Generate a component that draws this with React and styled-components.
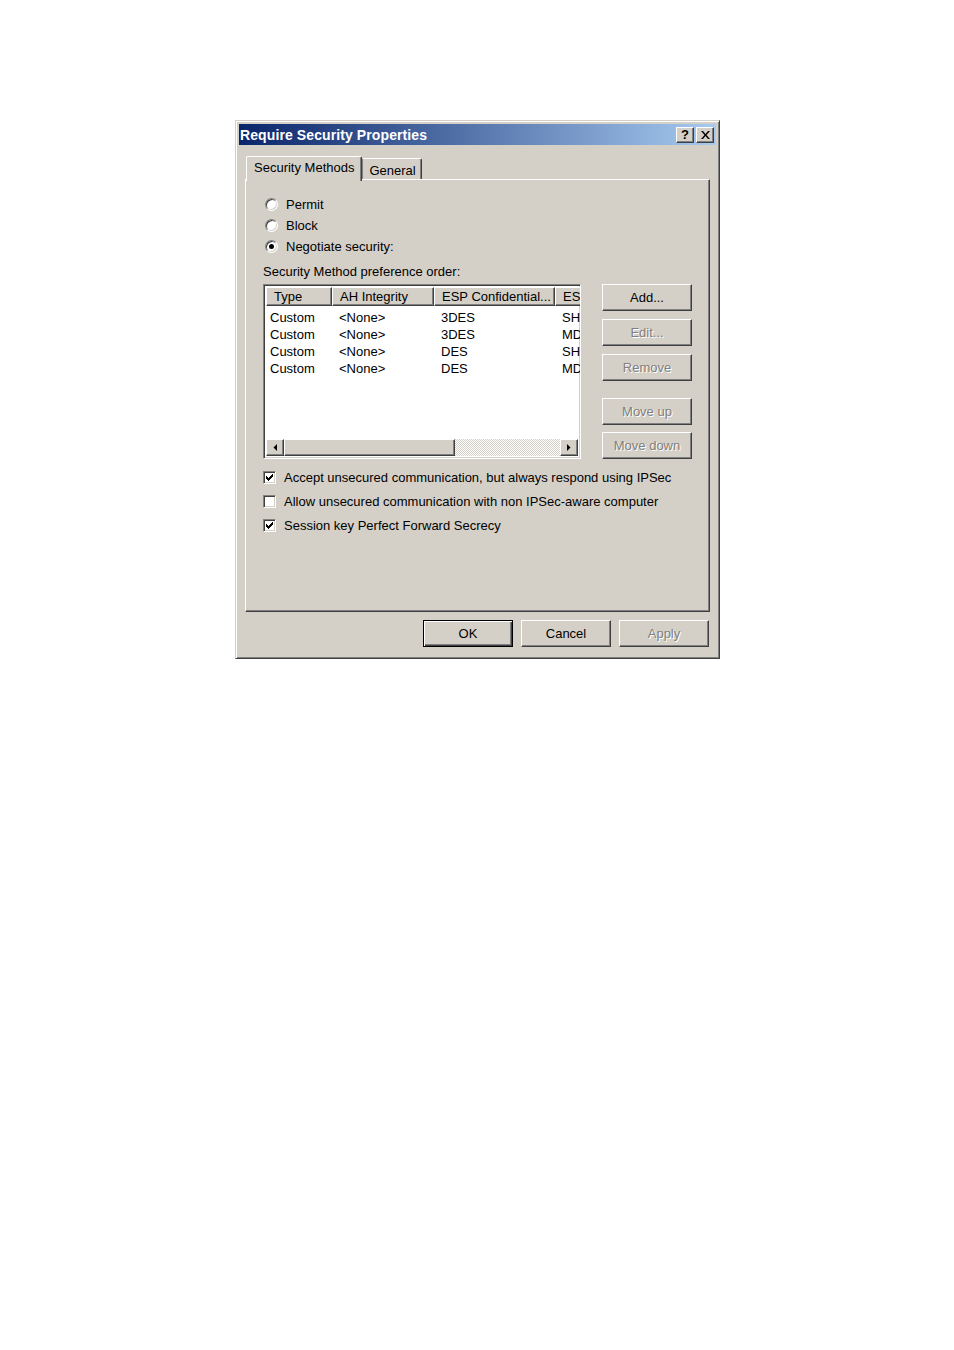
import styled, { createGlobalStyle, css } from 'styled-components';

const GlobalStyle = createGlobalStyle`
	html, body {
		margin: 0;
		padding: 0;
		background: #ffffff;
	}
	body {
		font-family: 'Liberation Sans', Arial, sans-serif;
		font-size: 13px;
		color: #000;
	}
`;

const face = '#d4d0c8';
const shadow = '#808080';
const darkShadow = '#404040';

const raised = css`
	border: 1px solid;
	border-color: #ffffff ${darkShadow} ${darkShadow} #ffffff;
	box-shadow: inset -1px -1px ${shadow}, inset 1px 1px ${face};
`;

const sunken = css`
	border: 1px solid;
	border-color: ${shadow} #ffffff #ffffff ${shadow};
	box-shadow: inset 1px 1px ${darkShadow}, inset -1px -1px ${face};
`;

const Page = styled.div`
	padding: 120px 0 0 235px;
	min-height: 1350px;
	box-sizing: border-box;
`;

const Window = styled.div`
	width: 485px;
	box-sizing: border-box;
	background: ${face};
	border: 1px solid;
	border-color: ${face} ${darkShadow} ${darkShadow} ${face};
	box-shadow: inset 1px 1px #ffffff, inset -1px -1px ${shadow};
	padding: 3px 3px 11px 3px;
	display: flex;
	flex-direction: column;
`;

const TitleBar = styled.div`
	height: 21px;
	display: flex;
	align-items: center;
	justify-content: space-between;
	padding: 0 2px 0 0;
	background: linear-gradient(to right, #0a246a, #a6caf0);
`;

const Title = styled.span`
	color: #ffffff;
	font-weight: bold;
	font-size: 14px;
	letter-spacing: 0.1px;
	padding-left: 1px;
`;

const TitleButtons = styled.div`
	display: flex;
	gap: 2px;
`;

const TitleButton = styled.div`
	${raised};
	width: 18px;
	height: 16px;
	box-sizing: border-box;
	background: ${face};
	display: flex;
	align-items: center;
	justify-content: center;
	font-weight: bold;
	font-size: 13px;
	line-height: 1;
`;

const Body = styled.div`
	padding: 11px 6px 0 6px;
	display: flex;
	flex-direction: column;
`;

const TabStrip = styled.div`
	display: flex;
	align-items: flex-end;
	padding-left: 1px;
	position: relative;
	z-index: 1;
	margin-bottom: -2px;
`;

const Tab = styled.div`
	box-sizing: border-box;
	height: 25px;
	padding: 0 7px 4px 7px;
	display: flex;
	align-items: center;
	background: ${face};
	border-top: 1px solid #ffffff;
	border-left: 1px solid #ffffff;
	border-right: 1px solid ${darkShadow};
	box-shadow: inset -1px 0 ${shadow};
	border-radius: 2px 2px 0 0;
	${(p) =>
		!p.$active &&
		css`
			padding: 2px 5px 0 6px;
			border-left: 1px solid ${shadow};
			margin-bottom: 2px;
			height: 21px;
		`}
`;

const TabPanel = styled.div`
	box-sizing: border-box;
	height: 433px;
	border: 1px solid;
	border-color: #ffffff ${darkShadow} ${darkShadow} #ffffff;
	box-shadow: inset -1px -1px ${shadow};
	padding: 14px 16px 0 17px;
	display: flex;
	flex-direction: column;
`;

const OptionRow = styled.label`
	height: ${(p) => p.$h || 21}px;
	display: flex;
	align-items: center;
	gap: ${(p) => p.$gap || 8}px;
	padding-left: ${(p) => p.$indent || 0}px;
`;

const Radio = styled.span`
	width: 13px;
	height: 13px;
	box-sizing: border-box;
	border-radius: 50%;
	border: 1px solid;
	border-color: ${shadow} #ffffff #ffffff ${shadow};
	box-shadow: inset 1px 1px ${darkShadow}, inset -1px -1px ${face};
	background: #ffffff;
	display: flex;
	align-items: center;
	justify-content: center;
	&::after {
		content: '';
		width: 5px;
		height: 5px;
		border-radius: 50%;
		background: ${(p) => (p.$checked ? '#000' : 'transparent')};
	}
`;

const Checkbox = styled.span`
	${sunken};
	width: 13px;
	height: 13px;
	box-sizing: border-box;
	background: #ffffff;
	display: flex;
	align-items: center;
	justify-content: center;
`;

const SectionLabel = styled.div`
	margin-top: 7px;
	height: 15px;
	display: flex;
	align-items: center;
`;

const Middle = styled.div`
	margin-top: 5px;
	display: flex;
	gap: 21px;
`;

const ListView = styled.div`
	${sunken};
	width: 318px;
	height: 175px;
	box-sizing: border-box;
	padding: 2px;
	background: #ffffff;
	display: flex;
	flex-direction: column;
	overflow: hidden;
`;

const HeaderRow = styled.div`
	display: flex;
	height: 19px;
	flex-shrink: 0;
`;

const HeaderCell = styled.div`
	${raised};
	background: ${face};
	box-sizing: border-box;
	flex: 0 0 ${(p) => p.$w}px;
	padding-left: 7px;
	display: flex;
	align-items: center;
	white-space: nowrap;
	overflow: hidden;
`;

const Rows = styled.div`
	flex: 1;
	padding-top: 3px;
`;

const Row = styled.div`
	display: flex;
	height: 17px;
	align-items: center;
`;

const Cell = styled.div`
	flex: 0 0 ${(p) => p.$w}px;
	padding-left: ${(p) => p.$pad}px;
	box-sizing: border-box;
	white-space: nowrap;
	overflow: hidden;
`;

const ScrollBar = styled.div`
	height: 17px;
	display: flex;
	flex-shrink: 0;
`;

const ScrollButton = styled.div`
	${raised};
	background: ${face};
	box-sizing: border-box;
	width: 18px;
	display: flex;
	align-items: center;
	justify-content: center;
`;

const Thumb = styled.div`
	${raised};
	background: ${face};
	box-sizing: border-box;
	width: 171px;
`;

const Track = styled.div`
	flex: 1;
	background-color: ${face};
	background-image: repeating-conic-gradient(#ffffff 0 25%, ${face} 0 50%);
	background-size: 2px 2px;
`;

const ButtonColumn = styled.div`
	display: flex;
	flex-direction: column;
	gap: 8px;
`;

const Button = styled.button`
	${raised};
	width: 90px;
	height: 27px;
	box-sizing: border-box;
	background: ${face};
	font-family: 'Liberation Sans', Arial, sans-serif;
	font-size: 13px;
	padding: 0;
	margin: ${(p) => p.$gapTop || 0}px 0 0 0;
	color: ${(p) => (p.disabled ? shadow : '#000')};
	text-shadow: ${(p) => (p.disabled ? '1px 1px #ffffff' : 'none')};
	${(p) =>
		p.$default &&
		css`
			border: 1px solid #000;
			box-shadow: inset 1px 1px #ffffff, inset -1px -1px ${darkShadow},
				inset -2px -2px ${shadow};
		`}
`;

const Checks = styled.div`
	margin-top: 6px;
	display: flex;
	flex-direction: column;
`;

const Footer = styled.div`
	display: flex;
	justify-content: flex-end;
	gap: 8px;
	padding: 8px 0 0 0;
	margin-right: 1px;
`;

const CheckMark = () => (
	<svg width="7" height="7" viewBox="0 0 7 7">
		<path d="M0 2h1v1h1v1h1V3h1V2h1V1h1V0h1v3H6v1H5v1H4v1H3v1H2V6H1V5H0z" fill="#000" />
	</svg>
);

const CloseIcon = () => (
	<svg width="9" height="8" viewBox="0 0 9 8">
		<path d="M0 0h2l2.5 3 2.5-3h2L5.5 4 9 8H7L4.5 5 2 8H0l3.5-4z" fill="#000" />
	</svg>
);

const Arrow = ({ dir }) => (
	<svg width="4" height="7" viewBox="0 0 4 7">
		{dir === 'left' ? (
			<polygon points="4,0 4,7 0.5,3.5" fill="#000" />
		) : (
			<polygon points="0,0 0,7 3.5,3.5" fill="#000" />
		)}
	</svg>
);

const columns = [
	{ id: 'Type', w: 66 },
	{ id: 'AH Integrity', w: 102 },
	{ id: 'ESP Confidential...', w: 121 },
	{ id: 'ES', w: 40 },
];

// the last column is clipped by the list edge, as in the dialog
const methods = [
	['Custom', '<None>', '3DES', 'SHA1'],
	['Custom', '<None>', '3DES', 'MD5'],
	['Custom', '<None>', 'DES', 'SHA1'],
	['Custom', '<None>', 'DES', 'MD5'],
];

const options = [
	{ label: 'Accept unsecured communication, but always respond using IPSec', checked: true },
	{ label: 'Allow unsecured communication with non IPSec-aware computer', checked: false },
	{ label: 'Session key Perfect Forward Secrecy', checked: true },
];

const App = () => {
	return (
		<>
			<GlobalStyle />
			<Page>
				<Window>
					<TitleBar>
						<Title>Require Security Properties</Title>
						<TitleButtons>
							<TitleButton>?</TitleButton>
							<TitleButton>
								<CloseIcon />
							</TitleButton>
						</TitleButtons>
					</TitleBar>
					<Body>
						<TabStrip>
							<Tab $active>Security Methods</Tab>
							<Tab>General</Tab>
						</TabStrip>
						<TabPanel>
							<OptionRow $indent={2}>
								<Radio />
								Permit
							</OptionRow>
							<OptionRow $indent={2}>
								<Radio />
								Block
							</OptionRow>
							<OptionRow $indent={2}>
								<Radio $checked />
								Negotiate security:
							</OptionRow>
							<SectionLabel>Security Method preference order:</SectionLabel>
							<Middle>
								<ListView>
									<HeaderRow>
										{columns.map((col) => (
											<HeaderCell key={col.id} $w={col.w}>
												{col.id}
											</HeaderCell>
										))}
									</HeaderRow>
									<Rows>
										{methods.map((m, i) => (
											<Row key={i}>
												{m.map((v, j) => (
													<Cell key={j} $w={columns[j].w} $pad={j === 0 ? 4 : 7}>
														{v}
													</Cell>
												))}
											</Row>
										))}
									</Rows>
									<ScrollBar>
										<ScrollButton>
											<Arrow dir="left" />
										</ScrollButton>
										<Thumb />
										<Track />
										<ScrollButton>
											<Arrow dir="right" />
										</ScrollButton>
									</ScrollBar>
								</ListView>
								<ButtonColumn>
									<Button>Add...</Button>
									<Button disabled>Edit...</Button>
									<Button disabled>Remove</Button>
									<Button disabled $gapTop={9}>
										Move up
									</Button>
									<Button disabled $gapTop={-1}>
										Move down
									</Button>
								</ButtonColumn>
							</Middle>
							<Checks>
								{options.map((o) => (
									<OptionRow key={o.label} $h={24} $gap={8}>
										<Checkbox>{o.checked && <CheckMark />}</Checkbox>
										{o.label}
									</OptionRow>
								))}
							</Checks>
						</TabPanel>
						<Footer>
							<Button $default>OK</Button>
							<Button>Cancel</Button>
							<Button disabled>Apply</Button>
						</Footer>
					</Body>
				</Window>
			</Page>
		</>
	);
};

export default App;
